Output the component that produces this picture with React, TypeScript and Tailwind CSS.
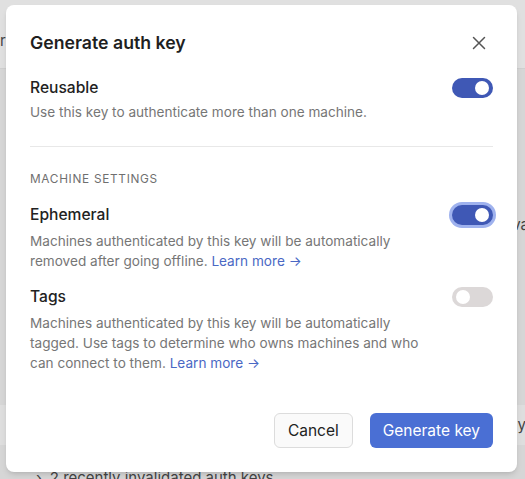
import React from 'react';

const Toggle: React.FC<{ on: boolean; focused?: boolean }> = ({ on, focused }) => {
  return (
    <div
      className={`relative h-5 w-[41px] shrink-0 rounded-full ${on ? 'bg-[#3f58b5]' : 'bg-[#dcd8d8]'} ${
        focused ? 'ring-[3px] ring-[#9fb2ee]' : ''
      }`}
    >
      <div
        className={`absolute top-[3px] h-[14px] w-[14px] rounded-full bg-white ${on ? 'right-[4px]' : 'left-[4px]'}`}
      />
    </div>
  );
};

const LearnMore = () => <span className="text-[#4a68c4]">Learn more →</span>;

const App: React.FC = () => {
  return (
    <div
      className="relative h-[479px] w-[525px] overflow-hidden bg-[#d6d6d6] text-[#222]"
      style={{ fontFamily: 'Inter, "Noto Sans", sans-serif' }}
    >
      {/* page behind the dialog */}
      <div className="h-[69px] border-b border-[#cfcfcf] bg-[#e0e0e0]">
        <div className="pt-[30px] text-[15px] text-[#444]">rs</div>
      </div>
      <div className="flex h-[22px] justify-end pt-0 text-[15px] leading-[22px] text-[#444] mt-[145px]">
        <span className="-mr-[4px]">va</span>
      </div>
      <div className="mt-[169px] flex h-[40px] items-center justify-end bg-[#dedede] text-[15px] text-[#444]">
        <span className="-mr-[1px]">y</span>
      </div>
      <div className="mt-[22px] flex items-center gap-2 pl-[36px] text-[15px] leading-[22px] text-[#444]">
        <span>›</span>
        <span>2 recently invalidated auth keys</span>
      </div>

      {/* dialog */}
      <div className="absolute left-[6px] top-[5px] flex h-[467px] w-[511px] flex-col rounded-lg bg-white px-6 pb-6 pt-6 shadow-md">
        <div className="flex items-center justify-between">
          <h2 className="text-[17.7px] font-semibold leading-7 text-[#1f1f1f]">Generate auth key</h2>
          <svg width="16" height="16" viewBox="0 0 16 16" className="mr-[6px] text-[#555]">
            <path d="M2.5 2.5 13.5 13.5M13.5 2.5 2.5 13.5" stroke="currentColor" strokeWidth="1.5" strokeLinecap="round" />
          </svg>
        </div>

        <div className="mt-[19px] flex items-start justify-between">
          <div>
            <div className="text-[15.6px] font-medium leading-6">Reusable</div>
            <p className="mt-0.5 text-[13.6px] leading-5 text-[#767676]">
              Use this key to authenticate more than one machine.
            </p>
          </div>
          <div className="pt-[2px]">
            <Toggle on />
          </div>
        </div>

        <div className="mt-6 border-t border-[#e8e8e8]" />

        <div className="mt-6 text-[11.8px] uppercase leading-4 tracking-[0.06em] text-[#6f6f6f]">Machine settings</div>

        <div className="mt-4 flex items-start justify-between">
          <div className="w-[395px]">
            <div className="text-[15.6px] font-medium leading-6">Ephemeral</div>
            <p className="mt-1 text-[13.6px] leading-5 text-[#767676]">
              Machines authenticated by this key will be automatically removed after going offline. <LearnMore />
            </p>
          </div>
          <div className="pt-[2px]">
            <Toggle on focused />
          </div>
        </div>

        <div className="mt-3.5 flex items-start justify-between">
          <div className="w-[395px]">
            <div className="text-[15.6px] font-medium leading-6">Tags</div>
            <p className="mt-1 text-[13.6px] leading-5 text-[#767676]">
              Machines authenticated by this key will be automatically tagged. Use tags to determine who owns machines
              and who can connect to them. <LearnMore />
            </p>
          </div>
          <div className="pt-[2px]">
            <Toggle on={false} />
          </div>
        </div>

        <div className="mt-auto flex justify-end gap-[17px]">
          <button className="h-[35px] rounded-md border border-[#dcdcdc] bg-[#fafafa] px-[13px] text-[15.5px] font-normal text-[#222]">
            Cancel
          </button>
          <button className="h-[35px] rounded-md bg-[#4a6fd4] px-[13px] text-[15.5px] font-normal text-white">
            Generate key
          </button>
        </div>
      </div>
    </div>
  );
};

export default App;
